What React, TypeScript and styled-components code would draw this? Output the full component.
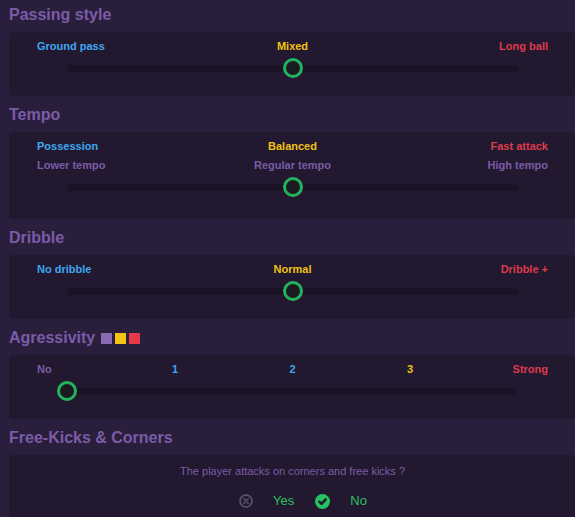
import React from "react"
import styled, { createGlobalStyle } from "styled-components"

const GlobalStyle = createGlobalStyle`
  body {
    margin: 0;
    background: #2a1e3d;
    font-family: "Liberation Sans", Arial, sans-serif;
    overflow: hidden;
  }
`

type Tone = "blue" | "yellow" | "red" | "purple"

const tones: Record<Tone, string> = {
  blue: "#3ea7ef",
  yellow: "#f1c214",
  red: "#df3a4c",
  purple: "#7a5ca6",
}

const App = () => {
  return (
    <Page>
      <GlobalStyle />

      <Title>Passing style</Title>
      <Panel>
        <LabelRow>
          <Label $tone="blue">Ground pass</Label>
          <Label $tone="yellow">Mixed</Label>
          <Label $tone="red">Long ball</Label>
        </LabelRow>
        <Slider value={50} />
      </Panel>

      <Title>Tempo</Title>
      <Panel $bottom={22}>
        <LabelRow>
          <Label $tone="blue">Possession</Label>
          <Label $tone="yellow">Balanced</Label>
          <Label $tone="red">Fast attack</Label>
        </LabelRow>
        <LabelRow $sub>
          <Label $tone="purple">Lower tempo</Label>
          <Label $tone="purple">Regular tempo</Label>
          <Label $tone="purple">High tempo</Label>
        </LabelRow>
        <Slider value={50} />
      </Panel>

      <Title>Dribble</Title>
      <Panel>
        <LabelRow>
          <Label $tone="blue">No dribble</Label>
          <Label $tone="yellow">Normal</Label>
          <Label $tone="red">Dribble +</Label>
        </LabelRow>
        <Slider value={50} />
      </Panel>

      <Title>
        Agressivity
        <Swatches>
          <Swatch $color="#8a6bb2" />
          <Swatch $color="#f3c512" />
          <Swatch $color="#e63a4a" />
        </Swatches>
      </Title>
      <Panel>
        <StepRow>
          <Step $tone="purple">No</Step>
          <Step $tone="blue">1</Step>
          <Step $tone="blue">2</Step>
          <Step $tone="yellow">3</Step>
          <Step $tone="red">Strong</Step>
        </StepRow>
        <Slider value={0} />
      </Panel>

      <Title>Free-Kicks &amp; Corners</Title>
      <Panel $top={9}>
        <Question>The player attacks on corners and free kicks ?</Question>
        <Options>
          <Option>
            <svg width="14" height="14" viewBox="0 0 14 14">
              <circle cx="7" cy="7" r="6" fill="none" stroke="#5e556e" strokeWidth="1.6" />
              <path d="M4.8 4.8 L9.2 9.2 M9.2 4.8 L4.8 9.2" stroke="#5e556e" strokeWidth="1.6" strokeLinecap="round" />
            </svg>
            <OptionText>Yes</OptionText>
          </Option>
          <Option>
            <svg width="15" height="15" viewBox="0 0 15 15">
              <circle cx="7.5" cy="7.5" r="7.5" fill="#27c163" />
              <path d="M4.3 7.7 L6.5 9.8 L10.7 5.4" fill="none" stroke="#22182f" strokeWidth="2.4" strokeLinecap="round" strokeLinejoin="round" />
            </svg>
            <OptionText>No</OptionText>
          </Option>
        </Options>
      </Panel>
    </Page>
  )
}

const Slider = ({ value }: { value: number }) => (
  <TrackArea>
    <Track />
    <Thumb style={{ left: `${value}%` }} />
  </TrackArea>
)

const Page = styled.div`
  padding-left: 9px;
`
const Title = styled.h2`
  display: flex;
  align-items: center;
  margin: 0;
  padding: 5px 0 7px;
  font-size: 16px;
  line-height: 20px;
  font-weight: 700;
  color: #7a5ca6;
`
const Swatches = styled.span`
  display: flex;
  gap: 3px;
  margin-left: 6px;
`
const Swatch = styled.span<{ $color: string }>`
  width: 11px;
  height: 11px;
  background: ${(p) => p.$color};
`
const Panel = styled.div<{ $bottom?: number; $top?: number }>`
  background: #22182f;
  border-radius: 4px;
  padding: ${(p) => p.$top ?? 7}px 27px ${(p) => p.$bottom ?? 18}px 28px;
  margin-bottom: 4px;
`
const LabelRow = styled.div<{ $sub?: boolean }>`
  display: grid;
  grid-template-columns: 1fr auto 1fr;
  margin-top: ${(p) => (p.$sub ? 5 : 0)}px;
  & > :first-child {
    text-align: left;
  }
  & > :last-child {
    text-align: right;
  }
`
const Label = styled.span<{ $tone: Tone }>`
  font-size: 11px;
  line-height: 14px;
  font-weight: 700;
  text-align: center;
  color: ${(p) => tones[p.$tone]};
`
const StepRow = styled.div`
  display: flex;
  justify-content: space-between;
  & > :first-child {
    text-align: left;
  }
  & > :last-child {
    text-align: right;
  }
`
const Step = styled(Label)`
  min-width: 41px;
`
const TrackArea = styled.div`
  position: relative;
  display: flex;
  align-items: center;
  height: 20px;
  margin: 5px 30px 0;
`
const Track = styled.div`
  flex: 1;
  height: 7px;
  border-radius: 4px;
  background: #1b1426;
`
const Thumb = styled.div`
  position: absolute;
  top: 0;
  width: 20px;
  height: 20px;
  box-sizing: border-box;
  border: 3.5px solid #22b35e;
  border-radius: 50%;
  background: #1c1b22;
  transform: translateX(-50%);
`
const Question = styled.div`
  font-size: 11px;
  line-height: 14px;
  text-align: center;
  color: #7a5ca6;
`
const Options = styled.div`
  display: flex;
  justify-content: center;
  margin-top: 13px;
  height: 20px;
`
const Option = styled.div`
  display: flex;
  align-items: center;
  svg {
    margin-left: 21px;
  }
`
const OptionText = styled.span`
  font-size: 13px;
  line-height: 20px;
  color: #27c163;
  margin-left: 20px;
`

export default App
